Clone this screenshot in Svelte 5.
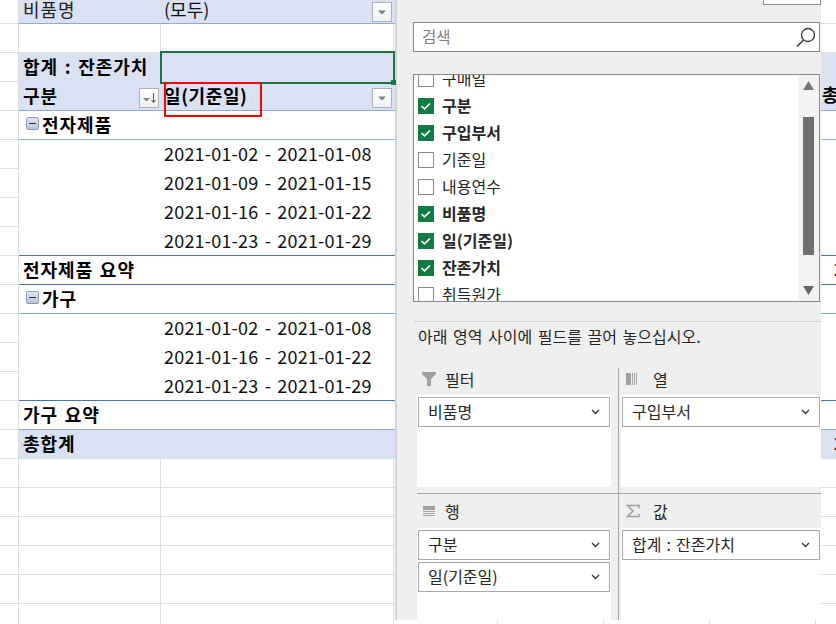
<script>
	const rows = [
		{ kind: "filter", rule: "grey", a: "비품명", b: "(모두)", btn: true },
		{ kind: "blank", rule: "grey" },
		{ kind: "head", rule: "none", a: "합계 : 잔존가치", selected: true, side: "" },
		{ kind: "head", rule: "light", a: "구분", b: "일(기준일)", sort: true, btn: true, marked: true, side: "총" },
		{ kind: "group", rule: "light", a: "전자제품" },
		{ kind: "item", rule: "none", b: "2021-01-02 - 2021-01-08" },
		{ kind: "item", rule: "none", b: "2021-01-09 - 2021-01-15" },
		{ kind: "item", rule: "none", b: "2021-01-16 - 2021-01-22" },
		{ kind: "item", rule: "dark", b: "2021-01-23 - 2021-01-29" },
		{ kind: "total", rule: "dark", a: "전자제품 요약", side: "2" },
		{ kind: "group", rule: "light", a: "가구" },
		{ kind: "item", rule: "none", b: "2021-01-02 - 2021-01-08" },
		{ kind: "item", rule: "none", b: "2021-01-16 - 2021-01-22" },
		{ kind: "item", rule: "dark", b: "2021-01-23 - 2021-01-29" },
		{ kind: "total", rule: "light", a: "가구 요약" },
		{ kind: "grand", rule: "none", a: "총합계", side: "2" },
		{ kind: "blank", rule: "grey" },
		{ kind: "blank", rule: "grey" },
		{ kind: "blank", rule: "grey" },
		{ kind: "blank", rule: "grey" },
		{ kind: "blank", rule: "grey" },
		{ kind: "blank", rule: "grey" }
	];

	const fields = [
		{ name: "구매일", on: false },
		{ name: "구분", on: true },
		{ name: "구입부서", on: true },
		{ name: "기준일", on: false },
		{ name: "내용연수", on: false },
		{ name: "비품명", on: true },
		{ name: "일(기준일)", on: true },
		{ name: "잔존가치", on: true },
		{ name: "취득원가", on: false }
	];

	const areas = [
		{ id: "filters", title: "필터", tiles: ["비품명"] },
		{ id: "cols", title: "열", tiles: ["구입부서"] },
		{ id: "lines", title: "행", tiles: ["구분", "일(기준일)"] },
		{ id: "sums", title: "값", tiles: ["합계 : 잔존가치"] }
	];
</script>

<div class="screen">
	<div class="sheet">
		{#each rows as row, i}
			<div class="row {row.kind} rule-{row.rule}" class:first={i === 0}>
				<div class="gutter"></div>
				<div class="cell a">
					{#if row.kind === "group"}
						<span class="minus"></span>
					{/if}
					{#if row.a}<span class="txt">{row.a}</span>{/if}
					{#if row.sort}
						<span class="drop sort">
							<svg width="18" height="18" viewBox="0 0 18 18">
								<path d="M3 9h7l-3.500 3.500z" fill="#808080" />
								<path d="M13.500 4v9M11.500 11l2 2.500 2-2.500" fill="none" stroke="#555" />
							</svg>
						</span>
					{/if}
				</div>
				<div class="cell b">
					{#if row.b}<span class="txt">{row.b}</span>{/if}
					{#if row.btn}
						<span class="drop">
							<svg width="18" height="18" viewBox="0 0 18 18">
								<path d="M5 7.500h8l-4 4z" fill="#808080" />
							</svg>
						</span>
					{/if}
					{#if row.selected}
						<div class="selection"><i></i></div>
					{/if}
					{#if row.marked}
						<div class="redbox"></div>
					{/if}
				</div>
				<div class="edge"></div>
			</div>
		{/each}
	</div>

	<div class="right">
		<div class="top">
			<div class="pane">
				<div class="pane-btn"></div>
				<div class="search">
					<span>검색</span>
					<svg width="22" height="22" viewBox="0 0 22 22">
						<circle cx="13" cy="9" r="6.500" fill="none" stroke="#333" stroke-width="1.300" />
						<path d="M8.500 14L2 20.500" stroke="#333" stroke-width="1.500" />
					</svg>
				</div>
				<div class="list">
					<div class="items">
						{#each fields as f}
							<div class="field" class:bold={f.on}>
								<span class="check" class:on={f.on}>
									{#if f.on}
										<svg width="16" height="16" viewBox="0 0 16 16">
											<path d="M3.500 8l3 2.800 5.500-5.300" fill="none" stroke="#fff" stroke-width="1.600" />
										</svg>
									{/if}
								</span>
								{f.name}
							</div>
						{/each}
					</div>
					<div class="scroll">
						<svg width="11" height="9" viewBox="0 0 11 9" class="up"><path d="M5.500 0L11 9H0z" fill="#777" /></svg>
						<div class="thumb"></div>
						<svg width="11" height="9" viewBox="0 0 11 9" class="down"><path d="M0 0h11L5.500 9z" fill="#666" /></svg>
					</div>
				</div>
				<div class="dots"></div>
				<div class="hint">아래 영역 사이에 필드를 끌어 놓으십시오.</div>
				<div class="areas">
					{#each areas as area}
						<div class="area {area.id}">
							<div class="area-head">
								{#if area.id === "filters"}
									<svg width="16" height="16" viewBox="0 0 16 16"><path d="M1 1h14v2L10 8v7H6V8L1 3z" fill="#a0a0a0" /></svg>
								{:else if area.id === "cols"}
									<svg width="16" height="16" viewBox="0 0 16 16">
										<path d="M1 2h5v12H1z" fill="#a0a0a0" />
										<path d="M7.500 2v12M9.500 2v12M11.500 2v12" stroke="#a8a8a8" />
									</svg>
								{:else if area.id === "lines"}
									<svg width="16" height="16" viewBox="0 0 16 16">
										<path d="M2 3h12v4H2z" fill="#a0a0a0" />
										<path d="M2 8.500h12M2 10.500h12M2 12.500h12" stroke="#a8a8a8" />
									</svg>
								{:else}
									<svg width="16" height="16" viewBox="0 0 16 16">
										<path d="M14 5V2.500H2.500L8 8l-5.500 5.500H14V11" fill="none" stroke="#a0a0a0" stroke-width="1.600" />
									</svg>
								{/if}
								<span>{area.title}</span>
							</div>
							<div class="area-body">
								{#each area.tiles as tile}
									<div class="tile">
										<span>{tile}</span>
										<svg width="9" height="6" viewBox="0 0 9 6"><path d="M1 1l3.500 3.500L8 1" fill="none" stroke="#333" stroke-width="1.300" /></svg>
									</div>
								{/each}
							</div>
						</div>
					{/each}
				</div>
			</div>
			<div class="side">
				{#each rows as row, i}
					<div class="side-row {row.kind} rule-{row.rule}" class:first={i === 0}>{row.side || ""}</div>
				{/each}
			</div>
		</div>
		<div class="ticks"></div>
	</div>
</div>

<style>
	:global(body) {
		margin: 0;
		background: #fff;
	}
	.screen {
		width: 836px;
		height: 624px;
		overflow: hidden;
		display: flex;
		font-family: "Noto Sans CJK KR", "Noto Sans", sans-serif;
		font-size: 18px;
		color: #000;
	}
	.sheet {
		width: 395px;
		flex-shrink: 0;
	}
	.row {
		display: grid;
		grid-template-columns: 19px 142px 233px 1px;
		grid-template-rows: 100%;
		height: 29px;
		box-sizing: border-box;
		line-height: 24px;
		overflow: hidden;
	}
	.row.first,
	.side-row.first {
		height: 24px;
	}
	.gutter {
		background: #fff;
		border-right: 1px solid #dedede;
		border-bottom: 1px solid #dedede;
		box-sizing: border-box;
	}
	.cell {
		position: relative;
		display: flex;
		align-items: center;
		white-space: nowrap;
		box-sizing: border-box;
		padding-bottom: 3px;
		word-spacing: 1.500px;
	}
	.a {
		padding-left: 4px;
		letter-spacing: 1px;
	}
	.b {
		padding-left: 3px;
	}
	.first .cell {
		padding-bottom: 5px;
	}
	.rule-grey .cell,
	.rule-grey .edge {
		border-bottom: 1px solid #dedede;
	}
	.rule-light .cell,
	.rule-light .edge {
		border-bottom: 1px solid #8ea9db;
	}
	.rule-dark .cell,
	.rule-dark .edge {
		border-bottom: 1px solid #4472c4;
	}
	.blank .a,
	.blank .b {
		border-right: 1px solid #dedede;
	}
	.filter .cell,
	.filter .edge,
	.head .cell,
	.head .edge,
	.grand .cell,
	.grand .edge {
		background: #d9e1f2;
	}
	.filter .a {
		color: #222;
	}
	.row.filter .cell,
	.row.filter .edge {
		border-bottom-color: #8ea9db;
	}
	.head .a,
	.head .b,
	.group .a,
	.total .a,
	.grand .a {
		font-weight: 700;
	}
	.head .b {
		letter-spacing: 0.600px;
	}
	.filter .b,
	.item .b {
		color: #111;
	}
	.item .b {
		word-spacing: 2px;
		letter-spacing: 0.2px;
	}
	.drop {
		position: absolute;
		right: 2px;
		top: 6px;
		width: 18px;
		height: 18px;
		border: 1px solid #b0b0b0;
		background: linear-gradient(#fff, #eef0f4);
		display: block;
	}
	.filter .drop {
		top: 2px;
	}
	.drop svg {
		display: block;
	}
	.minus {
		width: 11px;
		height: 11px;
		margin: 0 3px 0 3px;
		border: 1px solid #8d9db8;
		border-radius: 2px;
		background: linear-gradient(#dfe4ee, #b9c4d8);
		position: relative;
		flex-shrink: 0;
	}
	.minus::after {
		content: "";
		position: absolute;
		left: 2px;
		right: 2px;
		top: 5px;
		height: 1px;
		background: #333;
	}
	.row.head:has(.selection),
	.row.head:has(.redbox) {
		overflow: visible;
	}
	.selection {
		position: absolute;
		left: -1px;
		top: -2px;
		right: -1px;
		bottom: -2px;
		border: 2px solid #217346;
		z-index: 2;
	}
	.selection i {
		position: absolute;
		right: -3px;
		bottom: -3px;
		width: 5px;
		height: 5px;
		background: #217346;
	}
	.redbox {
		position: absolute;
		left: 3px;
		top: 0;
		width: 98px;
		height: 35px;
		box-sizing: border-box;
		border: 2px solid #f00;
		z-index: 3;
	}

	.right {
		flex: 1;
		display: flex;
		flex-direction: column;
	}
	.top {
		display: flex;
		height: 620px;
	}
	.pane {
		width: 426px;
		flex-shrink: 0;
		box-sizing: border-box;
		background: #efefef;
		border-left: 2px solid #d4d4d4;
		padding-left: 16px;
		color: #262626;
		font-size: 16px;
		overflow: hidden;
	}
	.pane-btn {
		margin-left: 350px;
		width: 56px;
		height: 4px;
		background: #fff;
		border: 1px solid #8a8a8a;
		border-top: 0;
	}
	.search {
		margin-top: 17px;
		width: 407px;
		height: 30px;
		box-sizing: border-box;
		background: #fff;
		border: 1px solid #8a8a8a;
		display: flex;
		align-items: center;
		justify-content: space-between;
		padding: 0 2px 0 8px;
		color: #808080;
	}
	.search span {
		margin-bottom: 3px;
		font-size: 15.500px;
	}
	.list {
		margin-top: 22px;
		width: 407px;
		height: 228px;
		box-sizing: border-box;
		background: #fff;
		border: 1px solid #8a8a8a;
		overflow: hidden;
		display: flex;
		justify-content: space-between;
	}
	.items {
		margin-top: -9px;
		flex: 1;
	}
	.field {
		height: 27px;
		line-height: 24px;
		display: flex;
		gap: 8px;
		padding-left: 4px;
	}
	.field.bold {
		font-weight: 700;
	}
	.check {
		width: 16px;
		height: 16px;
		margin-top: 5px;
		box-sizing: border-box;
		border: 1px solid #8a8a8a;
		background: #fff;
		flex-shrink: 0;
	}
	.check.on {
		background: #107c41;
		border: 0;
	}
	.check svg {
		display: block;
	}
	.scroll {
		width: 21px;
		background: #f3f3f3;
		box-sizing: border-box;
		padding-left: 5px;
		display: flex;
		flex-direction: column;
		align-items: flex-start;
	}
	.up {
		margin-top: 6px;
	}
	.thumb {
		margin-top: 27px;
		width: 11px;
		height: 138px;
		background: #6f6f6f;
	}
	.down {
		margin-top: 31px;
	}
	.dots {
		margin: 19px 0 0 2px;
		border-top: 1px dotted #b8b8b8;
	}
	.hint {
		margin: 2px 0 0 5px;
		line-height: 24px;
		word-spacing: 2px;
	}
	.areas {
		margin: 20px 0 0 4px;
		display: grid;
		grid-template-columns: 201px 203px;
		grid-template-rows: 126px 126px;
	}
	.area {
		display: flex;
		flex-direction: column;
		box-sizing: border-box;
	}
	.cols,
	.sums {
		border-left: 1px solid #a8a8a8;
		padding-left: 2px;
	}
	.filters,
	.cols {
		border-bottom: 1px solid #a8a8a8;
		padding-bottom: 6px;
	}
	.filters {
		margin-right: -4px;
	}
	.area-head {
		height: 27px;
		box-sizing: border-box;
		padding: 0 0 6px 4px;
		display: flex;
		align-items: center;
		gap: 8px;
		flex-shrink: 0;
	}
	.lines .area-head,
	.sums .area-head {
		height: 34px;
		padding-bottom: 1px;
	}
	.cols .area-head span,
	.sums .area-head span {
		margin-left: 4px;
	}
	.area-body {
		flex: 1;
		background: #fff;
		margin-right: 7px;
		padding: 2px 1px;
		display: flex;
		flex-direction: column;
		gap: 2px;
	}
	.filters .area-body {
		margin-right: 11px;
	}
	.cols .area-body,
	.sums .area-body {
		margin-right: 0;
	}
	.tile {
		height: 30px;
		flex-shrink: 0;
		box-sizing: border-box;
		background: #fff;
		border: 1px solid #a8a8a8;
		display: flex;
		align-items: center;
		justify-content: space-between;
		padding: 0 9px 0 9px;
		word-spacing: 1.500px;
	}
	.tile span {
		margin-bottom: 2px;
	}
	.side {
		flex: 1;
		overflow: hidden;
	}
	.side-row {
		height: 29px;
		box-sizing: border-box;
		line-height: 24px;
		font-weight: 700;
		overflow: hidden;
		white-space: nowrap;
		padding-left: 1px;
	}
	.side-row.rule-grey {
		border-bottom: 1px solid #dedede;
	}
	.side-row.rule-light {
		border-bottom: 1px solid #8ea9db;
	}
	.side-row.rule-dark {
		border-bottom: 1px solid #4472c4;
	}
	.side-row.total,
	.side-row.grand {
		padding-left: 13px;
	}
	.side-row.head,
	.side-row.grand {
		background: #d9e1f2;
	}
	.ticks {
		flex: 1;
		background: repeating-linear-gradient(90deg, transparent 0 102px, #dedede 102px 103px, transparent 103px 106px);
	}
</style>
